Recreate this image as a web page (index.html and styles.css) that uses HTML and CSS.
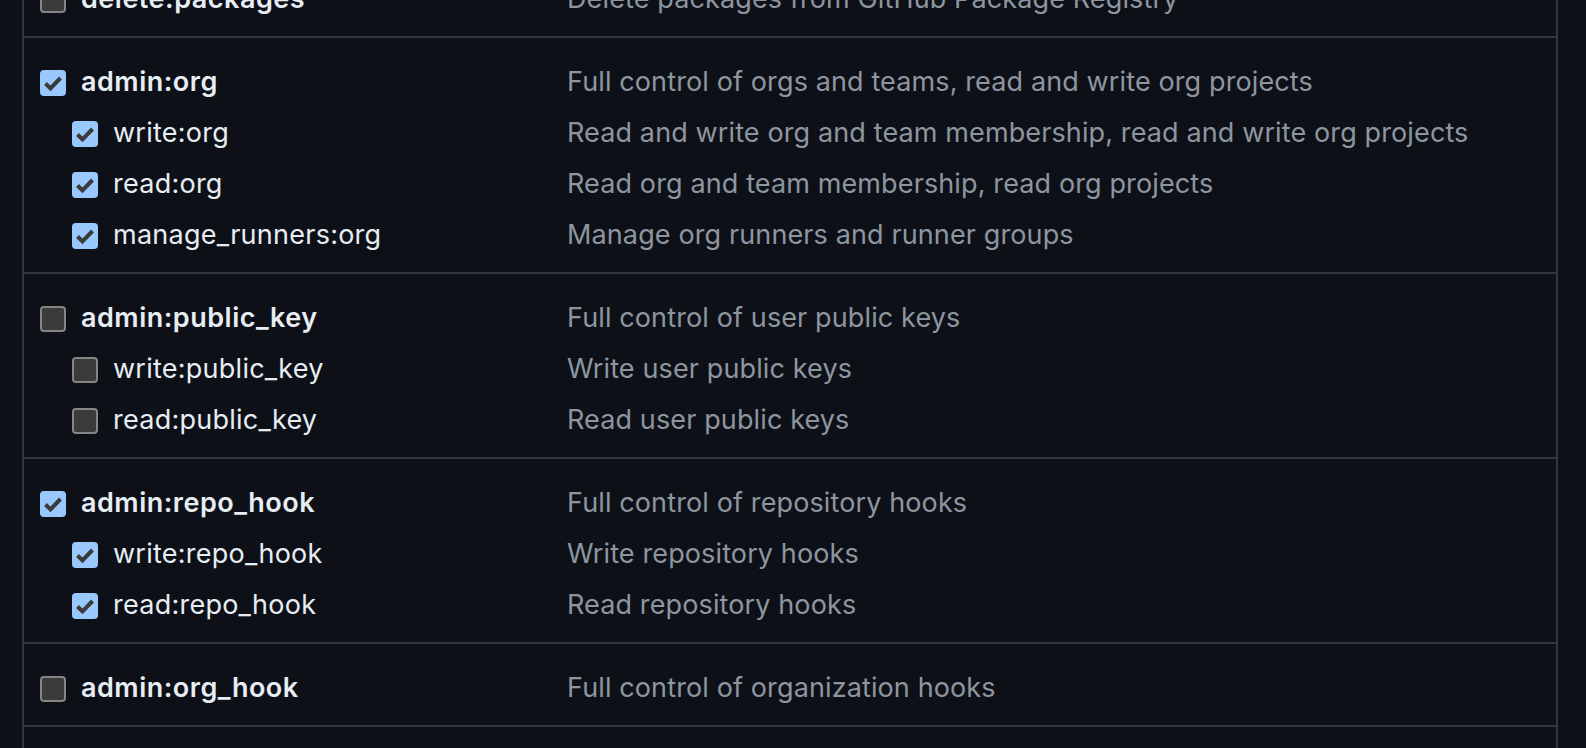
FILE: index.html
```html
<!DOCTYPE html>
<html lang="en">
<head>
<meta charset="utf-8">
<title>Token scopes</title>
<link rel="stylesheet" href="styles.css">
</head>
<body>
<div class="page">
  <div class="panel">
    <div class="group">
      <div class="row top">
        <div class="scope"><span class="box off"></span><span class="name">delete:packages</span></div>
        <div class="desc">Delete packages from GitHub Package Registry</div>
      </div>
    </div>

    <div class="group">
      <div class="row top">
        <div class="scope"><span class="box on"><svg viewBox="0 0 26 26"><polyline points="5.5,13.5 10.5,18.5 20.5,8"/></svg></span><span class="name">admin:org</span></div>
        <div class="desc">Full control of orgs and teams, read and write org projects</div>
      </div>
      <div class="row child">
        <div class="scope"><span class="box on"><svg viewBox="0 0 26 26"><polyline points="5.5,13.5 10.5,18.5 20.5,8"/></svg></span><span class="name">write:org</span></div>
        <div class="desc">Read and write org and team membership, read and write org projects</div>
      </div>
      <div class="row child">
        <div class="scope"><span class="box on"><svg viewBox="0 0 26 26"><polyline points="5.5,13.5 10.5,18.5 20.5,8"/></svg></span><span class="name">read:org</span></div>
        <div class="desc">Read org and team membership, read org projects</div>
      </div>
      <div class="row child">
        <div class="scope"><span class="box on"><svg viewBox="0 0 26 26"><polyline points="5.5,13.5 10.5,18.5 20.5,8"/></svg></span><span class="name">manage_runners:org</span></div>
        <div class="desc">Manage org runners and runner groups</div>
      </div>
    </div>

    <div class="group">
      <div class="row top">
        <div class="scope"><span class="box off"></span><span class="name">admin:public_key</span></div>
        <div class="desc">Full control of user public keys</div>
      </div>
      <div class="row child">
        <div class="scope"><span class="box off"></span><span class="name">write:public_key</span></div>
        <div class="desc">Write user public keys</div>
      </div>
      <div class="row child">
        <div class="scope"><span class="box off"></span><span class="name">read:public_key</span></div>
        <div class="desc">Read user public keys</div>
      </div>
    </div>

    <div class="group">
      <div class="row top">
        <div class="scope"><span class="box on"><svg viewBox="0 0 26 26"><polyline points="5.5,13.5 10.5,18.5 20.5,8"/></svg></span><span class="name">admin:repo_hook</span></div>
        <div class="desc">Full control of repository hooks</div>
      </div>
      <div class="row child">
        <div class="scope"><span class="box on"><svg viewBox="0 0 26 26"><polyline points="5.5,13.5 10.5,18.5 20.5,8"/></svg></span><span class="name">write:repo_hook</span></div>
        <div class="desc">Write repository hooks</div>
      </div>
      <div class="row child">
        <div class="scope"><span class="box on"><svg viewBox="0 0 26 26"><polyline points="5.5,13.5 10.5,18.5 20.5,8"/></svg></span><span class="name">read:repo_hook</span></div>
        <div class="desc">Read repository hooks</div>
      </div>
    </div>

    <div class="group">
      <div class="row top">
        <div class="scope"><span class="box off"></span><span class="name">admin:org_hook</span></div>
        <div class="desc">Full control of organization hooks</div>
      </div>
    </div>

    <div class="group">
      <div class="row top">
        <div class="scope"><span class="box off"></span><span class="name">gist</span></div>
        <div class="desc">Create gists</div>
      </div>
    </div>
  </div>
</div>
</body>
</html>
```

FILE: styles.css
```css
html, body {
  margin: 0;
  padding: 0;
  background: #0d1117;
  height: 748px;
  overflow: hidden;
}

body {
  font-family: Inter, "Noto Sans", "Liberation Sans", sans-serif;
  font-size: 27px;
  color: #e6edf3;
}

.page {
  padding: 0 28px 0 22px;
}

.panel {
  margin-top: -47px;
  border: 2px solid #30363d;
  border-radius: 12px;
}

.group {
  display: flex;
  flex-direction: column;
  gap: 25px;
  padding: 32px 0 23px 16px;
  border-top: 2px solid #30363d;
}

.group:first-child {
  border-top: none;
}

.row {
  display: flex;
  align-items: center;
  height: 26px;
}

.scope {
  flex: 0 0 527px;
  box-sizing: border-box;
  display: flex;
  align-items: center;
  gap: 15px;
}

.row.child .scope {
  padding-left: 32px;
}

.name {
  line-height: 26px;
  white-space: nowrap;
  letter-spacing: 0.25px;
  margin-bottom: 3px;
}

.row.top .name {
  font-weight: 600;
  letter-spacing: 0.5px;
}

.desc {
  line-height: 26px;
  color: #8d96a0;
  white-space: nowrap;
  letter-spacing: 0.12px;
  margin-bottom: 3px;
}

.box {
  flex: 0 0 26px;
  width: 26px;
  height: 26px;
  box-sizing: border-box;
  border-radius: 4px;
  display: block;
}

.box.off {
  background: #3b3b3b;
  border: 2px solid #858585;
}

.box.on {
  background: #99c8ff;
}

.box svg {
  display: block;
  width: 26px;
  height: 26px;
}

.box svg polyline {
  fill: none;
  stroke: #3b3b3b;
  stroke-width: 4;
  stroke-linecap: butt;
  stroke-linejoin: miter;
}
```
